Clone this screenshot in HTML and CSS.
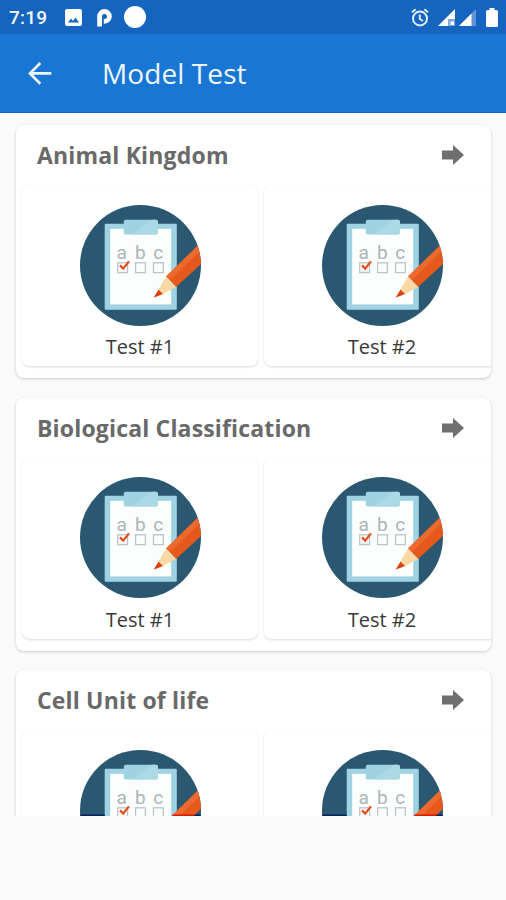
FILE: index.html
```html
<!DOCTYPE html>
<html lang="en">
<head>
<meta charset="utf-8">
<title>Model Test</title>
<link rel="stylesheet" href="styles.css">
</head>
<body>
<svg class="defs" width="0" height="0" aria-hidden="true">
  <defs>
    <clipPath id="disc"><circle cx="60.5" cy="60.5" r="60.5"/></clipPath>
    <symbol id="quiz" viewBox="0 0 121 121">
      <circle cx="60.5" cy="60.5" r="60.5" fill="#2a5871"/>
      <rect x="24.7" y="18.7" width="72.1" height="86" rx="1" fill="#9fd3e3"/>
      <rect x="30.2" y="23.8" width="61" height="75.6" fill="#fcfdfd"/>
      <rect x="43.8" y="14.8" width="34" height="14.6" rx="2" fill="#a0d3e1"/>
      <path d="M52 29.4L72 14.8H76a2 2 0 0 1 2 2V27.4a2 2 0 0 1-2 2z" fill="#abd9e6"/>
      <g fill="none" stroke="#bcc4c8" stroke-width="1.3">
        <rect x="37.7" y="57.8" width="9.8" height="9.8"/>
        <rect x="55.6" y="57.8" width="9.8" height="9.8"/>
        <rect x="73.5" y="57.8" width="9.8" height="9.8"/>
      </g>
      <path d="M40 60.4L43.2 63.6L49 56.4" fill="none" stroke="#e04e1b" stroke-width="2.3"/>
      <g clip-path="url(#disc)">
        <path d="M86 71.5L122 36.5L133 48L96 82z" fill="#e6591b"/>
        <path d="M86 71.5L122 36.5L126 40.5L89.5 75.3z" fill="#ec6a30"/>
        <path d="M86 71.5L96 82L83 89L78.5 84.5z" fill="#f8d9a6"/>
        <path d="M78.5 84.5L83 89L73.6 92.7z" fill="#d8420f"/>
      </g>
    </symbol>
    <symbol id="go" viewBox="0 0 22 20"><path d="M0 5.5H11V0L22 10L11 20V14.5H0z" fill="#6f6f6f"/></symbol>
  </defs>
</svg>
<header class="status">
  <span class="time">7:19</span>
  <svg class="s-image" viewBox="0 0 17 17"><rect width="17" height="17" rx="2" fill="#fff"/><path d="M3 13.5L6 9.5L8 12L10.5 8.5L14 13.5z" fill="#1565c0"/></svg>
  <svg class="s-p" viewBox="0 0 15 18"><path d="M2.6 17.5V7.4A4.9 4.9 0 1 1 7.5 12.3H6.8" fill="none" stroke="#fff" stroke-width="4.8"/></svg>
  <span class="s-dot"></span>
  <span class="grow"></span>
  <svg class="s-alarm" viewBox="0 0 18 19"><g fill="none" stroke="#e3efff" stroke-width="1.9"><circle cx="9" cy="10.5" r="7"/><path d="M1 4.3L4.6 1.3M17 4.3L13.4 1.3M8.8 6.5V11L12 13"/></g></svg>
  <svg class="s-sig" viewBox="0 0 17 17"><path d="M0 17L17 0V10H10.5V17z" fill="#fff"/><path d="M10.5 10H17V17H10.5z" fill="#7fa9dd"/><path d="M12.5 12.5H16V16H12.5z" fill="#fff"/></svg>
  <svg class="s-sig2" viewBox="0 0 17 17"><path d="M0 17L17 0V17z" fill="#5f93d4"/><path d="M0 17L12.5 4.5V17z" fill="#fff"/></svg>
  <svg class="s-bat" viewBox="0 0 12 19"><path d="M3.5 0H8.5V2H10.5Q12 2 12 3.5V17.5Q12 19 10.5 19H1.5Q0 19 0 17.5V3.5Q0 2 1.5 2H3.5z" fill="#fff"/></svg>
</header>
<nav class="bar">
  <svg class="back" viewBox="0 0 24 24"><path d="M23.3 12.4H2.5M12.3 2L2 12.4L12.3 22.8" fill="none" stroke="#eef5ff" stroke-width="2.7"/></svg>
  <h1>Model Test</h1>
</nav>
<main class="list">
  <section class="group">
    <div class="head"><h2>Animal Kingdom</h2><svg class="go"><use href="#go"/></svg></div>
    <div class="row">
      <article class="card"><svg class="quiz" viewBox="0 0 121 121"><use href="#quiz"/><text x="36.5" y="54">a</text><text x="55" y="54">b</text><text x="73.2" y="54">c</text></svg><p>Test #1</p></article>
      <article class="card"><svg class="quiz" viewBox="0 0 121 121"><use href="#quiz"/><text x="36.5" y="54">a</text><text x="55" y="54">b</text><text x="73.2" y="54">c</text></svg><p>Test #2</p></article>
    </div>
  </section>
  <section class="group">
    <div class="head"><h2>Biological Classification</h2><svg class="go"><use href="#go"/></svg></div>
    <div class="row">
      <article class="card"><svg class="quiz" viewBox="0 0 121 121"><use href="#quiz"/><text x="36.5" y="54">a</text><text x="55" y="54">b</text><text x="73.2" y="54">c</text></svg><p>Test #1</p></article>
      <article class="card"><svg class="quiz" viewBox="0 0 121 121"><use href="#quiz"/><text x="36.5" y="54">a</text><text x="55" y="54">b</text><text x="73.2" y="54">c</text></svg><p>Test #2</p></article>
    </div>
  </section>
  <section class="group">
    <div class="head"><h2>Cell Unit of life</h2><svg class="go"><use href="#go"/></svg></div>
    <div class="row">
      <article class="card"><svg class="quiz" viewBox="0 0 121 121"><use href="#quiz"/><text x="36.5" y="54">a</text><text x="55" y="54">b</text><text x="73.2" y="54">c</text><path d="M0.3 64.5H24.7V67H0.3zM115 64.5H120.7V67H112.7z" fill="#08205c"/><path d="M93.3 64.5H115.3L112.7 67H90.7z" fill="#dc1a08"/></svg></article>
      <article class="card"><svg class="quiz" viewBox="0 0 121 121"><use href="#quiz"/><text x="36.5" y="54">a</text><text x="55" y="54">b</text><text x="73.2" y="54">c</text><path d="M0.3 64.5H24.7V67H0.3zM115 64.5H120.7V67H112.7z" fill="#08205c"/><path d="M93.3 64.5H115.3L112.7 67H90.7z" fill="#dc1a08"/></svg></article>
    </div>
  </section>
</main>
</body>
</html>
```
FILE: styles.css
```css
* { box-sizing: border-box; }
body { margin: 0; width: 506px; height: 900px; overflow: hidden; background: #fafafa; font-family: "Open Sans", sans-serif; }
h1, h2, p { margin: 0; }
svg { display: block; flex: none; }
.defs { position: absolute; }
.status { height: 34px; background: #1565c0; display: flex; align-items: center; padding: 0 8px 0 9px; }
.time { font: 500 19px/34px Roboto, sans-serif; color: #f2f7ff; width: 56px; letter-spacing: 0.2px; padding-top: 2px; }
.s-image { width: 17px; height: 17px; margin-right: 15px; }
.s-p { width: 15px; height: 18px; margin: 1px 12px 0 0; }
.s-dot { width: 22px; height: 22px; border-radius: 50%; background: #fff; }
.grow { flex: 1; }
.s-alarm { width: 18px; height: 19px; margin-right: 9px; }
.s-sig { width: 17px; height: 17px; margin: 1px 4px 0 0; }
.s-sig2 { width: 17px; height: 17px; margin: 1px 10px 0 0; }
.s-bat { width: 12px; height: 19px; }
.bar { height: 79px; background: #1976d2; border-bottom: 1px solid #1260c0; display: flex; align-items: center; padding-left: 28px; }
.back { width: 24px; height: 24px; margin-right: 50px; }
h1 { font-size: 28px; font-weight: 400; line-height: 40px; color: #eef6ff; letter-spacing: 0.1px; }
.list { height: 703px; overflow: hidden; padding: 12px 15px 0 16px; display: flex; flex-direction: column; gap: 19.5px; }
.group { flex: none; height: 253px; background: #fff; border-radius: 8px; box-shadow: 0 1px 3px rgba(0,0,0,.2); overflow: hidden; padding-left: 6px; }
.head { height: 60px; display: flex; align-items: center; justify-content: space-between; padding: 0 27px 0 15px; }
h2 { font-size: 23px; font-weight: 700; line-height: 32px; color: #696969; letter-spacing: 0.17px; }
.go { width: 22px; height: 20px; }
.row { display: flex; gap: 6px; }
.card { flex: none; width: 236px; height: 181px; border-radius: 8px; background: #fff; box-shadow: 0 1px 2.5px rgba(0,0,0,.15); display: flex; flex-direction: column; align-items: center; padding-top: 19.5px; }
.quiz { width: 121px; height: 121px; }
.quiz text { font: 400 19px Roboto, sans-serif; fill: #aab4b9; }
.card p { font-size: 20px; line-height: 28px; color: #383838; margin-top: 7.5px; }
```
